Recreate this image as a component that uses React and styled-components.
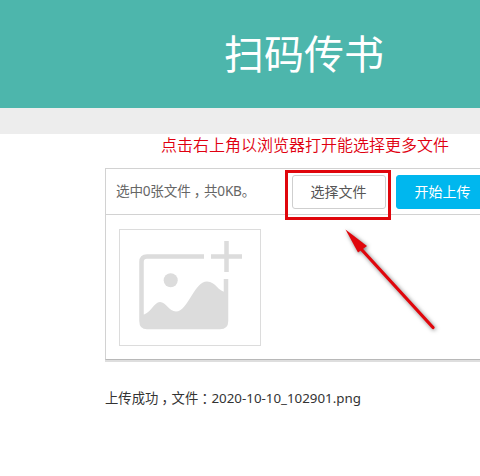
import React from 'react';
import styled, { createGlobalStyle } from 'styled-components';

const App = () => (
    <Page>
        <GlobalStyle />
        <Header>扫码传书</Header>
        <Band />
        <Notice>点击右上角以浏览器打开能选择更多文件</Notice>
        <Uploader>
            <Toolbar>
                <Status>选中0张文件<Mark>，</Mark>共0KB。</Status>
                <ButtonGroup>
                    <Button>选择文件</Button>
                    <Button $primary>开始上传</Button>
                </ButtonGroup>
                <Highlight />
            </Toolbar>
            <Preview>
                <AddTile>
                    <PictureIcon />
                </AddTile>
            </Preview>
        </Uploader>
        <Result>上传成功<Mark>，</Mark>文件<Mark>：</Mark>2020-10-10_102901.png</Result>
        <Arrow />
    </Page>
)

const PictureIcon = () => (
    <svg width="106" height="92" viewBox="0 0 106 92">
        <path d="M66 16.500H9Q3.500 16.500 3.500 22V81Q3.500 87 9 87H82Q88 87 88 81V39" fill="none" stroke="#dcdcdc" strokeWidth="4.500" />
        <path d="M3 75C12 75 16 62 22 62C28 62 31 71.500 38 71.500C50 71.500 56 41.500 69 41.500C78 41.500 80 52 88 52V81Q88 88 81 88H10Q3 88 3 81Z" fill="#dcdcdc" />
        <circle cx="32.700" cy="40.300" r="7" fill="#dcdcdc" />
        <path d="M73 16.500H104M88.500 1V32" fill="none" stroke="#dcdcdc" strokeWidth="4.500" />
    </svg>
)

const Arrow = () => (
    <ArrowSvg width="110" height="120" viewBox="0 0 110 120">
        <path d="M22 30L93 107.500" stroke="#e0060c" strokeWidth="3.200" strokeLinecap="round" />
        <path d="M5.500 9.500L27 26L18 32.500Z" fill="#e0060c" />
    </ArrowSvg>
)

const GlobalStyle = createGlobalStyle`
    body {
        margin: 0;
        background: white;
        overflow: hidden;
        font-family: "Noto Sans", "Noto Sans CJK SC", sans-serif;
    }
`

const Page = styled.div`
    position: relative;
    width: 480px;
    height: 476px;
    overflow: hidden;
`

const Header = styled.h1`
    box-sizing: border-box;
    margin: 0;
    height: 108px;
    padding-left: 224px;
    background: #4db6ac;
    color: white;
    font-family: "Noto Sans CJK SC", sans-serif;
    font-size: 40px;
    font-weight: 400;
    line-height: 105px;
    white-space: nowrap;
`

const Band = styled.div`
    height: 26px;
    background: #ededed;
`

const Notice = styled.div`
    height: 34px;
    padding-left: 161px;
    color: #e00010;
    font-family: "Noto Sans CJK SC", sans-serif;
    font-size: 16px;
    font-weight: 350;
    line-height: 21px;
    white-space: nowrap;
`

const Uploader = styled.div`
    box-sizing: border-box;
    width: 500px;
    height: 192px;
    margin-left: 105px;
    border: 1px solid #d2d2d2;
    border-bottom: 1px solid #b8b8b8;
    box-shadow: 0 2px 0 #dedede;
`

const Toolbar = styled.div`
    position: relative;
    display: flex;
    align-items: center;
    height: 45px;
    padding-left: 10px;
    border-bottom: 1px solid #d2d2d2;
`

const Status = styled.div`
    width: 176px;
    padding-bottom: 1px;
    color: #666;
    font-size: 13.6px;
    letter-spacing: -0.2px;
    line-height: 20px;
    white-space: nowrap;
`

/* half-width punctuation, centred in a full-width cell */
const Mark = styled.span`
    padding: 0 3.3px;
    font-family: "Noto Sans CJK SC", sans-serif;
    font-feature-settings: "halt";
    letter-spacing: 0;
    line-height: 1;
`

const ButtonGroup = styled.div`
    display: flex;
    gap: 10px;
    padding-top: 1px;
`

const Button = styled.button`
    box-sizing: border-box;
    flex: none;
    width: 94px;
    height: 34px;
    padding: 0 1px 2px 0;
    border: 1px solid ${props => props.$primary ? '#00b7ee' : '#cfcfcf'};
    border-radius: 3px;
    background: ${props => props.$primary ? '#00b7ee' : 'white'};
    color: ${props => props.$primary ? 'white' : '#565656'};
    font-family: "Noto Sans CJK SC", sans-serif;
    font-size: 14px;
    white-space: nowrap;
`

const Highlight = styled.div`
    position: absolute;
    top: 1px;
    left: 179px;
    box-sizing: border-box;
    width: 106px;
    height: 50px;
    border: 3px solid #e0060c;
`

const Preview = styled.div`
    padding: 14px 13px;
`

const AddTile = styled.div`
    box-sizing: border-box;
    width: 142px;
    height: 117px;
    padding: 10px 0 0 18px;
    border: 1px solid #dcdcdc;
`

const Result = styled.div`
    margin: 28px 0 0 105px;
    color: #333;
    font-size: 13.33px;
    line-height: 20px;
    white-space: nowrap;
`

const ArrowSvg = styled.svg`
    position: absolute;
    top: 220px;
    left: 340px;
    filter: drop-shadow(1px 1px 2px rgba(0, 0, 0, 0.55));
`

export default App;
